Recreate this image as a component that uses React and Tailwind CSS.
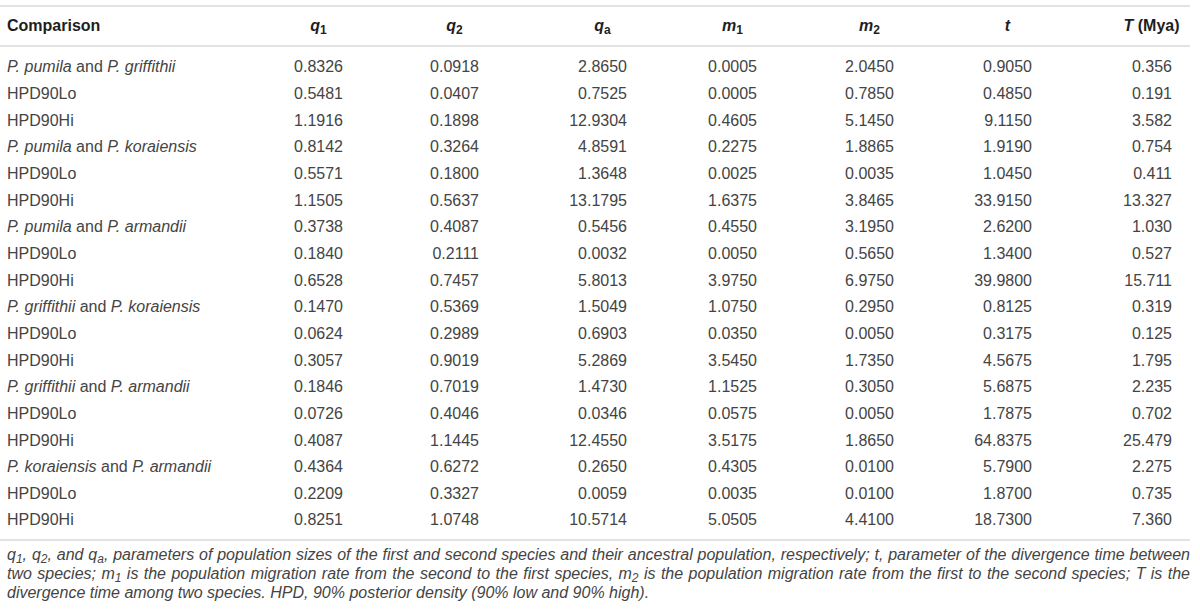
import React from 'react';

const rows = [
  [['P. pumila', 'P. griffithii'], '0.8326', '0.0918', '2.8650', '0.0005', '2.0450', '0.9050', '0.356'],
  ['HPD90Lo', '0.5481', '0.0407', '0.7525', '0.0005', '0.7850', '0.4850', '0.191'],
  ['HPD90Hi', '1.1916', '0.1898', '12.9304', '0.4605', '5.1450', '9.1150', '3.582'],
  [['P. pumila', 'P. koraiensis'], '0.8142', '0.3264', '4.8591', '0.2275', '1.8865', '1.9190', '0.754'],
  ['HPD90Lo', '0.5571', '0.1800', '1.3648', '0.0025', '0.0035', '1.0450', '0.411'],
  ['HPD90Hi', '1.1505', '0.5637', '13.1795', '1.6375', '3.8465', '33.9150', '13.327'],
  [['P. pumila', 'P. armandii'], '0.3738', '0.4087', '0.5456', '0.4550', '3.1950', '2.6200', '1.030'],
  ['HPD90Lo', '0.1840', '0.2111', '0.0032', '0.0050', '0.5650', '1.3400', '0.527'],
  ['HPD90Hi', '0.6528', '0.7457', '5.8013', '3.9750', '6.9750', '39.9800', '15.711'],
  [['P. griffithii', 'P. koraiensis'], '0.1470', '0.5369', '1.5049', '1.0750', '0.2950', '0.8125', '0.319'],
  ['HPD90Lo', '0.0624', '0.2989', '0.6903', '0.0350', '0.0050', '0.3175', '0.125'],
  ['HPD90Hi', '0.3057', '0.9019', '5.2869', '3.5450', '1.7350', '4.5675', '1.795'],
  [['P. griffithii', 'P. armandii'], '0.1846', '0.7019', '1.4730', '1.1525', '0.3050', '5.6875', '2.235'],
  ['HPD90Lo', '0.0726', '0.4046', '0.0346', '0.0575', '0.0050', '1.7875', '0.702'],
  ['HPD90Hi', '0.4087', '1.1445', '12.4550', '3.5175', '1.8650', '64.8375', '25.479'],
  [['P. koraiensis', 'P. armandii'], '0.4364', '0.6272', '0.2650', '0.4305', '0.0100', '5.7900', '2.275'],
  ['HPD90Lo', '0.2209', '0.3327', '0.0059', '0.0035', '0.0100', '1.8700', '0.735'],
  ['HPD90Hi', '0.8251', '1.0748', '10.5714', '5.0505', '4.4100', '18.7300', '7.360'],
];

const grid = 'grid grid-cols-[243px_93px_136px_148px_130px_137px_138px_140px]';

function Head({ children, w = 'w-[49px]' }) {
  return (
    <div className="flex justify-end">
      <div className={`${w} flex justify-center whitespace-nowrap`}>{children}</div>
    </div>
  );
}

function Sym({ v, s }) {
  return (
    <span>
      <i>{v}</i>
      {s && <sub>{s}</sub>}
    </span>
  );
}

export default function App() {
  return (
    <div className="w-[1200px] h-[613px] bg-white overflow-hidden pt-[5px] font-['Liberation_Sans',Arial,sans-serif]">
      <div className="w-[1190px]">
        <div className="h-[2px] bg-[#e2e2e2]" />

        {/* header */}
        <div className={`${grid} h-[38px] items-center pl-[7px] text-[16px] font-bold text-[#1e1e1e]`}>
          <div>Comparison</div>
          <Head><Sym v="q" s="1" /></Head>
          <Head><Sym v="q" s="2" /></Head>
          <Head><Sym v="q" s="a" /></Head>
          <Head><Sym v="m" s="1" /></Head>
          <Head><Sym v="m" s="2" /></Head>
          <Head><Sym v="t" /></Head>
          <Head w="w-[41px]"><span><i>T</i> (Mya)</span></Head>
        </div>
        <div className="h-[2px] bg-[#e2e2e2]" />

        {/* body */}
        <div className="pt-[7px] pb-[5px] text-[16px] text-[#444]">
          {rows.map((r, i) => (
            <div key={i} className={`${grid} h-[26.67px] items-center pl-[7px]`}>
              <div className="whitespace-nowrap">
                {Array.isArray(r[0]) ? (
                  <>
                    <i>{r[0][0]}</i> and <i>{r[0][1]}</i>
                  </>
                ) : (
                  r[0]
                )}
              </div>
              {r.slice(1).map((v, j) => (
                <div key={j} className="flex justify-end whitespace-nowrap">{v}</div>
              ))}
            </div>
          ))}
        </div>
        <div className="h-[2px] bg-[#e2e2e2]" />

        {/* footnote */}
        <div className="pt-[4px] pl-[7px] text-[16px] leading-[19px] italic text-[#444]">
          <div className="text-justify [text-align-last:justify]">
            q<sub>1</sub>, q<sub>2</sub>, and q<sub>a</sub>, parameters of population sizes of the first and second species and their ancestral population, respectively; t, parameter of the divergence time between
          </div>
          <div className="text-justify [text-align-last:justify]">
            two species; m<sub>1</sub> is the population migration rate from the second to the first species, m<sub>2</sub> is the population migration rate from the first to the second species; T is the
          </div>
          <div>divergence time among two species. HPD, 90% posterior density (90% low and 90% high).</div>
        </div>
      </div>
    </div>
  );
}
